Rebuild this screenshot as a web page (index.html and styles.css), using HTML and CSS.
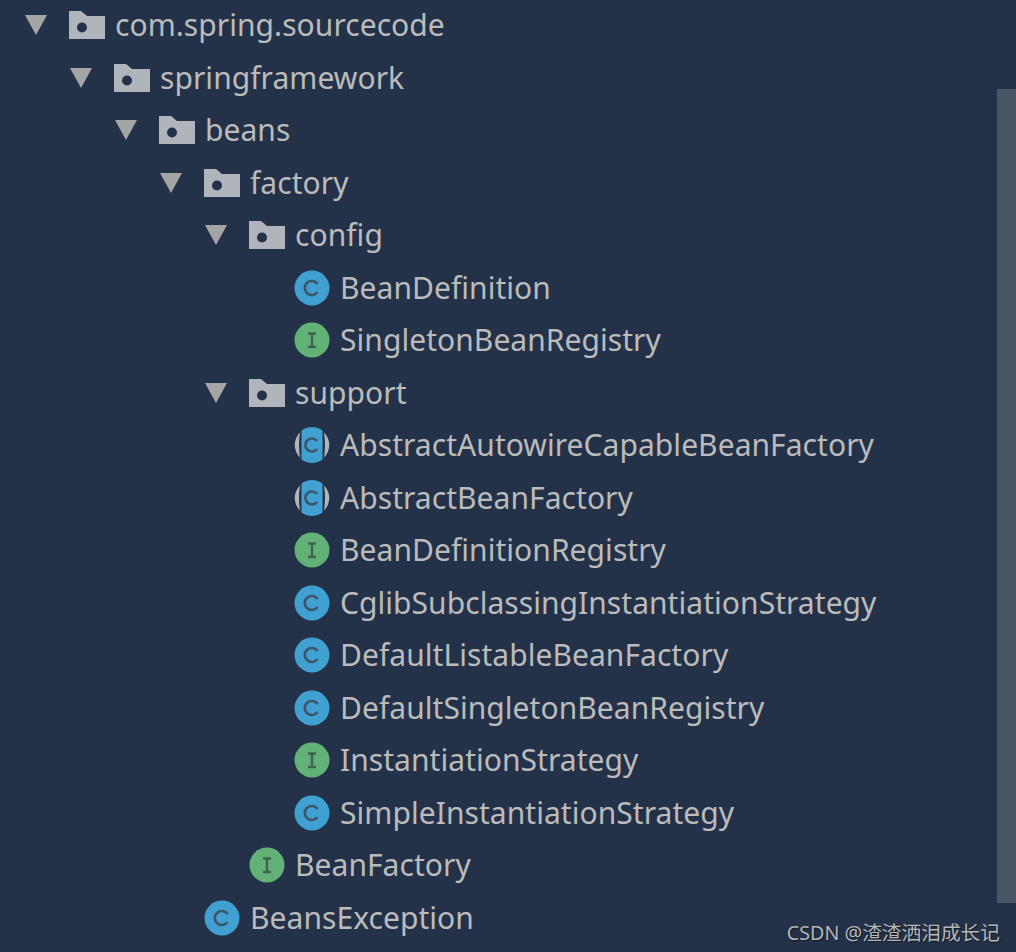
FILE: index.html
```html
<!DOCTYPE html>
<html lang="en">
<head>
  <meta charset="UTF-8">
  <title>Project tree</title>
  <link rel="stylesheet" href="styles.css">
</head>
<body>
<svg class="defs" width="0" height="0">
  <symbol id="arrow" viewBox="0 0 22 20"><path d="M0 0H22L11 20Z" fill="#a5a5a5"/></symbol>
  <symbol id="folder" viewBox="0 0 36 28">
    <path d="M0 0H12L18 5H36V28H0Z" fill="#b0b4bb"/>
    <circle cx="13" cy="16.500" r="5" fill="#243249"/>
  </symbol>
  <symbol id="cls" viewBox="0 0 36 36">
    <circle cx="18" cy="18" r="17.5" fill="#40a0d2"/>
    <path d="M23.500 14a7 7 0 1 0 0 8" fill="none" stroke="#3d5568" stroke-width="2.600"/>
  </symbol>
  <symbol id="iface" viewBox="0 0 36 36">
    <circle cx="18" cy="18" r="17.5" fill="#62b176"/>
    <path d="M14 11.500H22M18 11.500V25M14 25H22" fill="none" stroke="#3f6350" stroke-width="2.400"/>
  </symbol>
  <symbol id="abstract" viewBox="0 0 36 36">
    <path d="M6 5.500A17.500 17.500 0 0 0 6 30.500Q4 18 6 5.500ZM30 5.500A17.500 17.500 0 0 1 30 30.500Q32 18 30 5.500Z" fill="#b0b4bb"/>
    <path d="M7.500 3.500A17.500 17.500 0 0 1 28.500 3.500V32.500A17.500 17.500 0 0 1 7.500 32.500Z" fill="#40a0d2"/>
    <path d="M23 14a6.500 6.500 0 1 0 0 8" fill="none" stroke="#3d5568" stroke-width="2.600"/>
  </symbol>
</svg>

<ul class="tree">
  <li class="row depth-0"><svg class="arrow"><use href="#arrow"/></svg><svg class="icon folder"><use href="#folder"/></svg><span>com.spring.sourcecode</span></li>
  <li class="row depth-1"><svg class="arrow"><use href="#arrow"/></svg><svg class="icon folder"><use href="#folder"/></svg><span>springframework</span></li>
  <li class="row depth-2"><svg class="arrow"><use href="#arrow"/></svg><svg class="icon folder"><use href="#folder"/></svg><span>beans</span></li>
  <li class="row depth-3"><svg class="arrow"><use href="#arrow"/></svg><svg class="icon folder"><use href="#folder"/></svg><span>factory</span></li>
  <li class="row depth-4"><svg class="arrow"><use href="#arrow"/></svg><svg class="icon folder"><use href="#folder"/></svg><span>config</span></li>
  <li class="row depth-5"><i class="arrow"></i><svg class="icon"><use href="#cls"/></svg><span>BeanDefinition</span></li>
  <li class="row depth-5"><i class="arrow"></i><svg class="icon"><use href="#iface"/></svg><span>SingletonBeanRegistry</span></li>
  <li class="row depth-4"><svg class="arrow"><use href="#arrow"/></svg><svg class="icon folder"><use href="#folder"/></svg><span>support</span></li>
  <li class="row depth-5"><i class="arrow"></i><svg class="icon"><use href="#abstract"/></svg><span>AbstractAutowireCapableBeanFactory</span></li>
  <li class="row depth-5"><i class="arrow"></i><svg class="icon"><use href="#abstract"/></svg><span>AbstractBeanFactory</span></li>
  <li class="row depth-5"><i class="arrow"></i><svg class="icon"><use href="#iface"/></svg><span>BeanDefinitionRegistry</span></li>
  <li class="row depth-5"><i class="arrow"></i><svg class="icon"><use href="#cls"/></svg><span>CglibSubclassingInstantiationStrategy</span></li>
  <li class="row depth-5"><i class="arrow"></i><svg class="icon"><use href="#cls"/></svg><span>DefaultListableBeanFactory</span></li>
  <li class="row depth-5"><i class="arrow"></i><svg class="icon"><use href="#cls"/></svg><span>DefaultSingletonBeanRegistry</span></li>
  <li class="row depth-5"><i class="arrow"></i><svg class="icon"><use href="#iface"/></svg><span>InstantiationStrategy</span></li>
  <li class="row depth-5"><i class="arrow"></i><svg class="icon"><use href="#cls"/></svg><span>SimpleInstantiationStrategy</span></li>
  <li class="row depth-4"><i class="arrow"></i><svg class="icon"><use href="#iface"/></svg><span>BeanFactory</span></li>
  <li class="row depth-3"><i class="arrow"></i><svg class="icon"><use href="#cls"/></svg><span>BeansException</span></li>
</ul>

<div class="scrollbar"></div>
<div class="watermark">CSDN @渣渣洒泪成长记</div>
</body>
</html>
```

FILE: styles.css
```css
*{
  padding: 0;
  margin: 0;
  box-sizing: border-box;
}
html, body{
  height: 100%;
  overflow: hidden;
}
body{
  background-color: #243249;
  color: #bbbbbb;
  font-family: "Noto Sans", "Noto Sans CJK SC", sans-serif;
  font-size: 30px;
}
.defs{
  display: block;
}
.tree{
  list-style: none;
  margin-top: -1px;
}
.row{
  display: flex;
  align-items: center;
  height: 52.5px;
  white-space: nowrap;
  letter-spacing: 0.05px;
}
.row span{
  padding-bottom: 1px;
}
.depth-0{ padding-left: 25px; }
.depth-1{ padding-left: 70px; }
.depth-2{ padding-left: 115px; }
.depth-3{ padding-left: 160px; }
.depth-4{ padding-left: 205px; }
.depth-5{ padding-left: 250px; }
.arrow{
  display: block;
  flex: none;
  width: 22px;
  height: 20px;
  margin-right: 22px;
}
.icon{
  flex: none;
  width: 36px;
  height: 36px;
  margin-right: 10px;
}
.icon.folder{
  height: 28px;
}
.scrollbar{
  position: absolute;
  top: 89px;
  right: 0;
  width: 19px;
  height: 814px;
  background-color: #4a5566;
}
.watermark{
  position: absolute;
  right: 16px;
  bottom: 6px;
  font-size: 19.7px;
  color: #b4b6ba;
  text-shadow: 1px 1px 1px #14181f;
}
```
